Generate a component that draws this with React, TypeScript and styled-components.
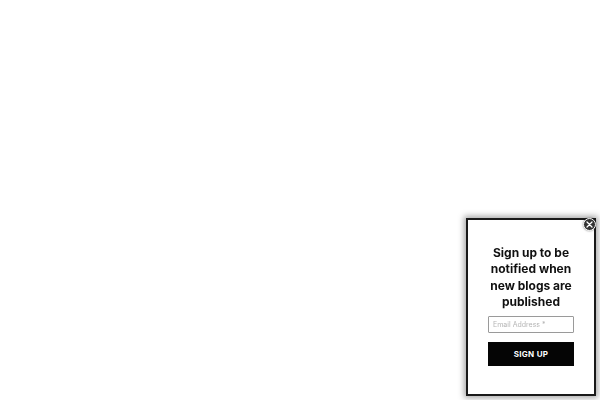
import React from "react";
import styled, { createGlobalStyle } from "styled-components";

const Global = createGlobalStyle`
  html, body { margin: 0; padding: 0; background: #ffffff; }
  body { width: 600px; height: 400px; overflow: hidden; font-family: Inter, "Noto Sans", sans-serif; }
`;

const Popup = styled.div`
  position: fixed;
  right: 4px;
  bottom: 4px;
  width: 130px;
  height: 178px;
  box-sizing: border-box;
  border: 2px solid #1a1a1a;
  background: #ffffff;
  box-shadow: 0 0 6px 2px rgba(0, 0, 0, 0.35);
  display: flex;
  flex-direction: column;
  align-items: center;
  padding: 25px 0 0;
`;

const Heading = styled.h2`
  margin: 0;
  font-family: Inter, "Noto Sans", sans-serif;
  font-weight: 700;
  font-size: 12px;
  line-height: 16.4px;
  color: #111111;
  text-align: center;
  white-space: nowrap;
`;

const Form = styled.form`
  margin-top: 5px;
  width: 86px;
  display: flex;
  flex-direction: column;
  gap: 9px;
`;

const Input = styled.input`
  box-sizing: border-box;
  width: 100%;
  height: 17px;
  border: 1px solid #9a9a9a;
  border-radius: 1px;
  padding: 0 4px;
  font-family: Inter, "Noto Sans", sans-serif;
  font-size: 7px;
  color: #333;
  outline: none;
  &::placeholder { color: #b5b5b5; }
`;

const Button = styled.button`
  box-sizing: border-box;
  width: 100%;
  height: 24px;
  border: none;
  background: #050505;
  color: #ffffff;
  font-family: Inter, "Noto Sans", sans-serif;
  font-weight: 700;
  font-size: 8px;
  letter-spacing: 0.3px;
  cursor: pointer;
`;

const Close = styled.button`
  position: absolute;
  top: -2px;
  right: -2px;
  width: 13px;
  height: 13px;
  padding: 0;
  border-radius: 50%;
  border: 1px solid #ffffff;
  background: #333333;
  box-shadow: 0 0 2px rgba(0, 0, 0, 0.5);
  display: flex;
  align-items: center;
  justify-content: center;
  cursor: pointer;
`;

export default function App() {
  return (
    <>
      <Global />
      <Popup>
        <Close aria-label="Close">
          <svg width="7" height="7" viewBox="0 0 7 7">
            <path d="M1 1L6 6M6 1L1 6" stroke="#ffffff" strokeWidth="1.3" strokeLinecap="round" />
          </svg>
        </Close>
        <Heading>
          Sign up to be
          <br />
          notified when
          <br />
          new blogs are
          <br />
          published
        </Heading>
        <Form onSubmit={(e) => e.preventDefault()}>
          <Input type="email" placeholder="Email Address *" />
          <Button type="submit">SIGN UP</Button>
        </Form>
      </Popup>
    </>
  );
}
